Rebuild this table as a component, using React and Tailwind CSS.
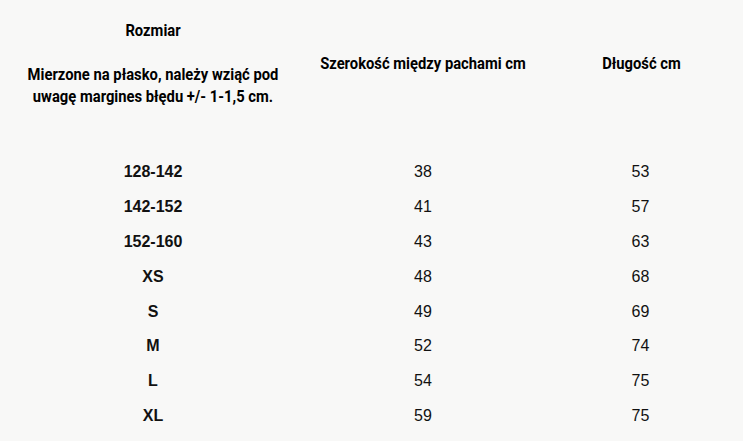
const rows = [
  ["128-142", "38", "53"],
  ["142-152", "41", "57"],
  ["152-160", "43", "63"],
  ["XS", "48", "68"],
  ["S", "49", "69"],
  ["M", "52", "74"],
  ["L", "54", "75"],
  ["XL", "59", "75"],
];

export default function App() {
  return (
    <div className="min-h-[441px] w-full bg-[#f8f8f7] text-[#111]">
      {/* header – narrow bold face */}
      <div className="grid h-[128px] grid-cols-[306px_234px_1fr] items-center text-center font-['Roboto',sans-serif] text-[16.5px] font-bold leading-[22px] text-black">
        <div className="scale-x-[0.895]">
          <p>Rozmiar</p>
          <p className="mt-[22px]">
            Mierzone na płasko, należy wziąć pod
            <br />
            uwagę margines błędu +/- 1-1,5 cm.
          </p>
        </div>
        <div className="scale-x-[0.895]">Szerokość między pachami cm</div>
        <div className="scale-x-[0.895]">Długość cm</div>
      </div>

      {/* rows */}
      <div className="mt-[27px] font-['Liberation_Sans',Arial,sans-serif] text-[16px]">
        {rows.map((r) => (
          <div
            key={r[0]}
            className="grid h-[34.8px] grid-cols-[306px_234px_1fr] items-center text-center"
          >
            <div className="font-bold">{r[0]}</div>
            <div>{r[1]}</div>
            <div className="pr-[2px]">{r[2]}</div>
          </div>
        ))}
      </div>
    </div>
  );
}
